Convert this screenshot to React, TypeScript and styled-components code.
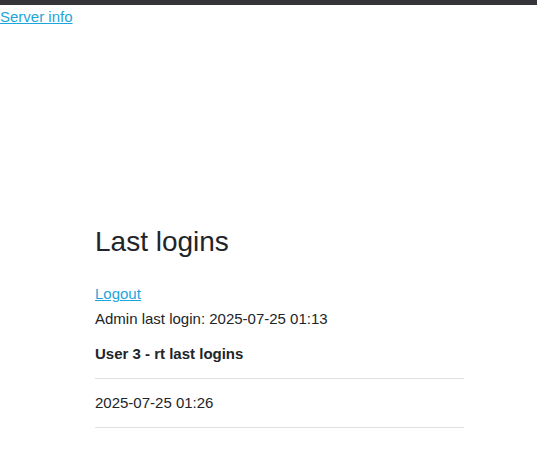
import React from "react";
import styled, { createGlobalStyle } from "styled-components";

const GlobalStyle = createGlobalStyle`
  html, body {
    margin: 0;
    padding: 0;
    background: #ffffff;
  }
  body {
    font-family: "Liberation Sans", Arial, Helvetica, sans-serif;
    font-size: 15px;
    line-height: 24px;
    color: #212529;
  }
`;

const TopBar = styled.div`
  height: 5px;
  background: #353539;
`;

const Link = styled.a`
  color: #1ea5dc;
  text-decoration: underline;
  cursor: pointer;
`;

const NavLine = styled.div`
  line-height: 24px;
`;

const Container = styled.main`
  margin: 196px 0 0 95px;
  width: 369px;
  display: flex;
  flex-direction: column;
`;

const Title = styled.h2`
  margin: 0 0 22px;
  font-size: 28px;
  font-weight: 400;
  line-height: 1.2;
  color: #212529;
`;

const Line = styled.div`
  line-height: 25px;
`;

const Subtitle = styled.h5`
  margin: 11px 0 12px;
  font-size: 15px;
  font-weight: 700;
  line-height: 24px;
`;

const Table = styled.table`
  width: 100%;
  border-collapse: collapse;
`;

const Cell = styled.td`
  padding: 12px 0;
  line-height: 24px;
  border-top: 1px solid #dee2e6;
  border-bottom: 1px solid #dee2e6;
`;

export default function App() {
  const logins = ["2025-07-25 01:26"];
  return (
    <>
      <GlobalStyle />
      <TopBar />
      <NavLine>
        <Link href="#">Server info</Link>
      </NavLine>
      <Container>
        <Title>Last logins</Title>
        <Line>
          <Link href="#">Logout</Link>
        </Line>
        <Line>Admin last login: 2025-07-25 01:13</Line>
        <Subtitle>User 3 - rt last logins</Subtitle>
        <Table>
          <tbody>
            {logins.map((l) => (
              <tr key={l}>
                <Cell>{l}</Cell>
              </tr>
            ))}
          </tbody>
        </Table>
      </Container>
    </>
  );
}
